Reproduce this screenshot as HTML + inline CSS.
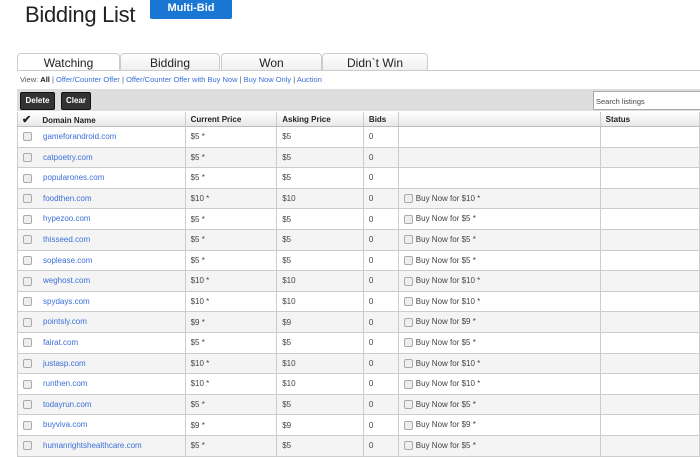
<!DOCTYPE html>
<html><head><style>
body{margin:0;width:700px;height:450px;overflow:hidden;background:#fff;font-family:"Liberation Sans",Arial,sans-serif;position:relative}
.title{position:absolute;left:25px;top:2px;font-size:22px;color:#222;letter-spacing:-0.3px}
.mb{position:absolute;left:150px;top:0;width:82px;height:19px;background:#1976d2;color:#fff;font-size:11px;font-weight:bold;text-align:center;line-height:17px;border-radius:0 0 2px 2px}
.tab{position:absolute;top:53px;height:17px;border:1px solid #ccc;border-bottom:none;border-radius:4px 4px 0 0;background:linear-gradient(#fff,#eee);font-size:12px;text-align:center;line-height:18px;color:#222}
.tline{position:absolute;left:17px;top:70px;width:683px;border-top:1px solid #ccc}
.view{position:absolute;left:20px;top:75px;font-size:7.5px;color:#555}
.view a{color:#3a6fd8;text-decoration:none}
.bar{position:absolute;left:17px;top:89px;width:683px;height:22px;background:#ddd}
.btn{position:absolute;top:92px;height:16px;background:#333;color:#fff;font-size:8px;font-weight:bold;line-height:16px;text-align:center;border-radius:2px;border:1px solid #111}
.search{position:absolute;left:593px;top:91px;width:110px;height:19px;border:1px solid #aaa;background:#fff;font-size:7.5px;line-height:19px;padding-left:2px;box-sizing:border-box;color:#444}
table{position:absolute;left:17px;top:112px;border-collapse:collapse;table-layout:fixed;font-size:8px}
td,th{border:1px solid #ccc;border-top:none;border-bottom:1px solid #ccc;height:19.6px;padding:0 0 0 5px;text-align:left;color:#444;white-space:nowrap;overflow:hidden}
th{height:14px;background:linear-gradient(#fff,#e8e8e8);font-weight:bold;color:#222;font-size:8px;border-bottom:1px solid #bbb}
td:first-child,th:first-child{border-left:1px solid #ccc}
tr.g td{background:#f4f4f4}
.cb{display:inline-block;width:7px;height:7px;border:1px solid #aaa;border-radius:2px;background:#eee;vertical-align:middle;margin-right:3px}
.d{color:#3a6fd8;margin-left:8px}
</style></head><body>
<div class="title">Bidding List</div>
<div class="mb">Multi-Bid</div>
<div class="tab" style="left:17px;width:101px;background:#fff">Watching</div>
<div class="tab" style="left:120px;width:98px">Bidding</div>
<div class="tab" style="left:221px;width:99px">Won</div>
<div class="tab" style="left:322px;width:104px">Didn`t Win</div>
<div class="tline"></div>
<div class="view">View: <b style="color:#222">All</b> | <a>Offer/Counter Offer</a> | <a>Offer/Counter Offer with Buy Now</a> | <a>Buy Now Only</a> | <a>Auction</a></div>
<div class="bar"></div>
<div class="btn" style="left:20px;width:33px">Delete</div>
<div class="btn" style="left:61px;width:28px">Clear</div>
<div class="search">Search listings</div>
<table>
<colgroup><col style="width:168px"><col style="width:92px"><col style="width:87px"><col style="width:35px"><col style="width:203px"><col style="width:100px"></colgroup>
<tr><th style="padding-left:4px"><span style="font-size:11px">✔</span>&nbsp;&nbsp;&nbsp;&nbsp; Domain Name</th><th>Current Price</th><th>Asking Price</th><th>Bids</th><th></th><th>Status</th></tr>
<tr><td><span class="cb"></span><span class="d">gameforandroid.com</span></td><td>$5 *</td><td>$5</td><td>0</td><td></td><td></td></tr>
<tr class="g"><td><span class="cb"></span><span class="d">catpoetry.com</span></td><td>$5 *</td><td>$5</td><td>0</td><td></td><td></td></tr>
<tr><td><span class="cb"></span><span class="d">popularones.com</span></td><td>$5 *</td><td>$5</td><td>0</td><td></td><td></td></tr>
<tr class="g"><td><span class="cb"></span><span class="d">foodthen.com</span></td><td>$10 *</td><td>$10</td><td>0</td><td><span class="cb"></span>Buy Now for $10 *</td><td></td></tr>
<tr><td><span class="cb"></span><span class="d">hypezoo.com</span></td><td>$5 *</td><td>$5</td><td>0</td><td><span class="cb"></span>Buy Now for $5 *</td><td></td></tr>
<tr class="g"><td><span class="cb"></span><span class="d">thisseed.com</span></td><td>$5 *</td><td>$5</td><td>0</td><td><span class="cb"></span>Buy Now for $5 *</td><td></td></tr>
<tr><td><span class="cb"></span><span class="d">soplease.com</span></td><td>$5 *</td><td>$5</td><td>0</td><td><span class="cb"></span>Buy Now for $5 *</td><td></td></tr>
<tr class="g"><td><span class="cb"></span><span class="d">weghost.com</span></td><td>$10 *</td><td>$10</td><td>0</td><td><span class="cb"></span>Buy Now for $10 *</td><td></td></tr>
<tr><td><span class="cb"></span><span class="d">spydays.com</span></td><td>$10 *</td><td>$10</td><td>0</td><td><span class="cb"></span>Buy Now for $10 *</td><td></td></tr>
<tr class="g"><td><span class="cb"></span><span class="d">pointsly.com</span></td><td>$9 *</td><td>$9</td><td>0</td><td><span class="cb"></span>Buy Now for $9 *</td><td></td></tr>
<tr><td><span class="cb"></span><span class="d">fairat.com</span></td><td>$5 *</td><td>$5</td><td>0</td><td><span class="cb"></span>Buy Now for $5 *</td><td></td></tr>
<tr class="g"><td><span class="cb"></span><span class="d">justasp.com</span></td><td>$10 *</td><td>$10</td><td>0</td><td><span class="cb"></span>Buy Now for $10 *</td><td></td></tr>
<tr><td><span class="cb"></span><span class="d">runthen.com</span></td><td>$10 *</td><td>$10</td><td>0</td><td><span class="cb"></span>Buy Now for $10 *</td><td></td></tr>
<tr class="g"><td><span class="cb"></span><span class="d">todayrun.com</span></td><td>$5 *</td><td>$5</td><td>0</td><td><span class="cb"></span>Buy Now for $5 *</td><td></td></tr>
<tr><td><span class="cb"></span><span class="d">buyviva.com</span></td><td>$9 *</td><td>$9</td><td>0</td><td><span class="cb"></span>Buy Now for $9 *</td><td></td></tr>
<tr class="g"><td><span class="cb"></span><span class="d">humanrightshealthcare.com</span></td><td>$5 *</td><td>$5</td><td>0</td><td><span class="cb"></span>Buy Now for $5 *</td><td></td></tr>
</table>
</body></html>
